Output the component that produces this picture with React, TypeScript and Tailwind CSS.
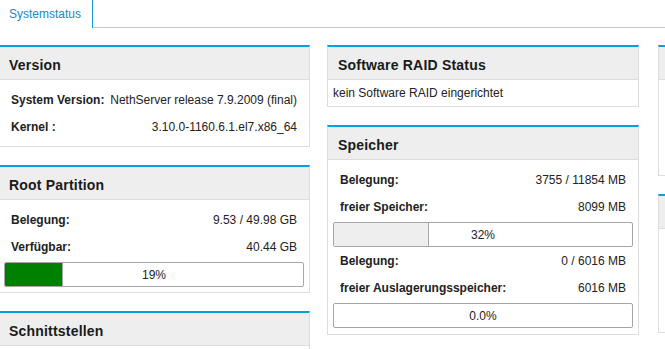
import React from 'react';

type Row = { label: string; value: string };

function Panel({ title, className = '', children }: { title: string; className?: string; children?: React.ReactNode }) {
  return (
    <div className={`border border-[#dddddd] border-t-2 border-t-[#00a0df] bg-white ${className}`}>
      <div className="h-[33px] flex items-center pt-[4px] px-[10px] bg-[#eeeeee] border-b border-[#dddddd] text-[14px] font-bold text-[#1a1a1a] tracking-[0.2px]">
        {title}
      </div>
      {children}
    </div>
  );
}

function Rows({ rows }: { rows: Row[] }) {
  return (
    <div>
      {rows.map(r => (
        <div key={r.label} className="h-[27px] flex items-center justify-between px-[12px] text-[12px] text-[#222]">
          <span className="font-bold">{r.label}</span>
          <span>{r.value}</span>
        </div>
      ))}
    </div>
  );
}

function Bar({ pct, label, color }: { pct: number; label: string; color: string }) {
  return (
    <div className="relative h-[25px] mx-[5px] border border-[#a6a6a6] rounded-[2px] bg-white overflow-hidden">
      <div className="h-full border-r border-[#a6a6a6]" style={{ width: `${pct}%`, background: color, display: pct > 0 ? 'block' : 'none' }} />
      <div className="absolute inset-0 flex items-center justify-center text-[12px] text-[#222]">{label}</div>
    </div>
  );
}

export default function App() {
  return (
    <div className="w-[665px] h-[349px] overflow-hidden bg-white" style={{ fontFamily: '"Liberation Sans", Arial, sans-serif' }}>
      <div className="flex h-[28px] border-b border-[#c8c8c8]">
        <div className="w-[93px] h-[28px] -mb-px bg-white border-r border-[#1a9ad6] flex items-center pl-[9px] text-[12px] text-[#1e87c0]">
          Systemstatus
        </div>
      </div>
      <div className="flex gap-[17px] pt-[17px] -ml-[2px]">
        <div className="w-[312px] shrink-0 flex flex-col gap-[18px]">
          <Panel title="Version">
            <div className="py-[6px]">
              <Rows rows={[{ label: 'System Version:', value: 'NethServer release 7.9.2009 (final)' }, { label: 'Kernel :', value: '3.10.0-1160.6.1.el7.x86_64' }]} />
            </div>
          </Panel>
          <Panel title="Root Partition">
            <div className="pt-[6px] pb-[5px]">
              <Rows rows={[{ label: 'Belegung:', value: '9.53 / 49.98 GB' }, { label: 'Verfügbar:', value: '40.44 GB' }]} />
              <div className="mt-[2px]">
                <Bar pct={19.5} label="19%" color="#008000" />
              </div>
            </div>
          </Panel>
          <Panel title="Schnittstellen" className="h-[80px]" />
        </div>
        <div className="w-[312px] shrink-0 flex flex-col gap-[18px]">
          <Panel title="Software RAID Status">
            <div className="h-[26px] flex items-center px-[5px] text-[12px] text-[#222]">kein Software RAID eingerichtet</div>
          </Panel>
          <Panel title="Speicher">
            <div className="pt-[6px] pb-[6px]">
              <Rows rows={[{ label: 'Belegung:', value: '3755 / 11854 MB' }, { label: 'freier Speicher:', value: '8099 MB' }]} />
              <div className="mt-[2px]">
                <Bar pct={32} label="32%" color="#eeeeee" />
              </div>
              <Rows rows={[{ label: 'Belegung:', value: '0 / 6016 MB' }, { label: 'freier Auslagerungsspeicher:', value: '6016 MB' }]} />
              <div className="mt-[2px]">
                <Bar pct={0} label="0.0%" color="#eeeeee" />
              </div>
            </div>
          </Panel>
        </div>
        <div className="w-[312px] shrink-0 flex flex-col gap-[18px] ml-[2px]">
          <Panel title="" className="h-[131px]" />
          <Panel title="" className="h-[139px]" />
        </div>
      </div>
    </div>
  );
}
